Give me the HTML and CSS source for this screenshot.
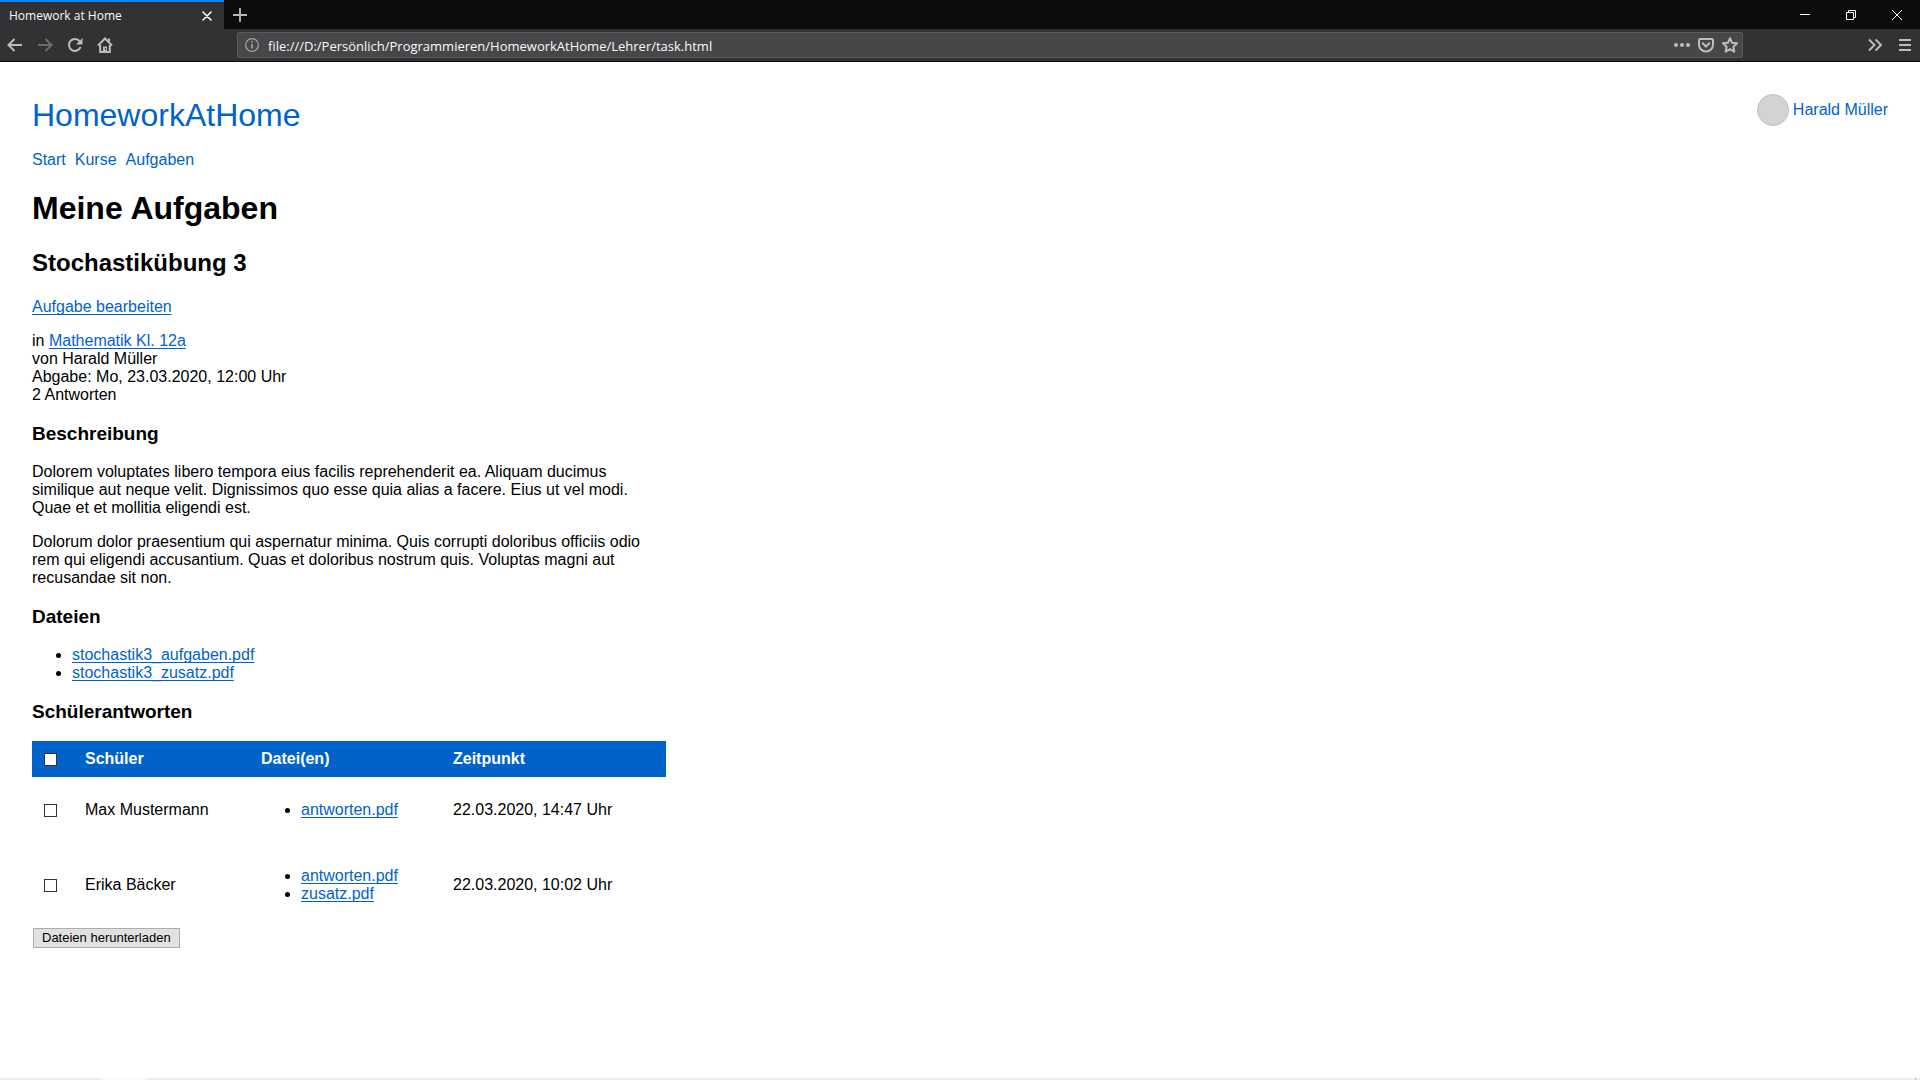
FILE: index.html
```html
<!DOCTYPE html>
<html lang="de">
<head>
<meta charset="utf-8">
<title>Homework at Home</title>
<link rel="stylesheet" href="styles.css">
</head>
<body>
<div class="browser">
  <div class="tabstrip">
    <div class="tab">
      <span class="tab-title">Homework at Home</span>
      <button class="tab-close" aria-label="Tab schließen"><svg width="10" height="10" viewBox="0 0 10 10"><path d="M1 1l8 8M9 1L1 9" stroke="#f9f9fa" stroke-width="1.6" fill="none" stroke-linecap="round"/></svg></button>
    </div>
    <button class="tab-new" aria-label="Neuer Tab"><svg width="14" height="14" viewBox="0 0 14 14"><path d="M7 0v14M0 7h14" stroke="#b8b8b9" stroke-width="1.8"/></svg></button>
    <div class="window-controls">
      <button aria-label="Minimieren"><svg width="10" height="10"><path d="M0 4.5h10" stroke="#fff"/></svg></button>
      <button aria-label="Verkleinern"><svg width="10" height="10"><path d="M.5 2.5h7v7h-7zM2.500 2.500V.5h7v7h-2" stroke="#fff" fill="none"/></svg></button>
      <button aria-label="Schließen"><svg width="10" height="10"><path d="M0 0l10 10M10 0L0 10" stroke="#fff"/></svg></button>
    </div>
  </div>
  <div class="toolbar">
    <button class="tool" aria-label="Zurück"><svg width="16" height="16" viewBox="0 0 16 16"><path d="M15 8H1.500M7.500 2L1.500 8l6 6"/></svg></button>
    <button class="tool disabled" aria-label="Vor" disabled><svg width="16" height="16" viewBox="0 0 16 16"><path d="M1 8h13.500M8.500 2l6 6-6 6"/></svg></button>
    <button class="tool" aria-label="Neu laden"><svg width="16" height="16" viewBox="0 0 16 16"><path d="M12.700 4.200A6 6 0 1 0 13.600 10"/><path class="solid" d="M15.500 1v6.500H9z"/></svg></button>
    <button class="tool" aria-label="Startseite"><svg width="16" height="16" viewBox="0 0 16 16"><path d="M1 8.500L8 1.500l7 7M3.200 8v7h9.600V8"/><path class="solid" d="M11 1.500h2V5l-2-1.500zM6 9.500h4V15H6z"/><path class="knob" d="M8.500 11v2"/></svg></button>
    <div class="urlbar">
      <svg class="info" width="14" height="14" viewBox="0 0 14 14"><circle cx="7" cy="7" r="6.400" fill="none" stroke="#a4a4a5" stroke-width="1.200"/><path d="M7 6v4.500M7 3v1.600" stroke="#a4a4a5" stroke-width="1.600"/></svg>
      <input class="url" type="text" aria-label="Adresse" value="file:///D:/Persönlich/Programmieren/HomeworkAtHome/Lehrer/task.html">
      <button class="url-action" aria-label="Seitenaktionen"><svg width="16" height="16" viewBox="0 0 16 16"><g class="solid"><circle cx="2" cy="8" r="2"/><circle cx="8" cy="8" r="2"/><circle cx="14" cy="8" r="2"/></g></svg></button>
      <button class="url-action" aria-label="Pocket"><svg width="16" height="16" viewBox="0 0 16 16"><path d="M2.300 2h11.400q1.300 0 1.300 1.300V7.500a7 7 0 0 1-14 0V3.300Q1 2 2.300 2z"/><path d="M4.700 6.300L8 9.500l3.300-3.200" stroke-linecap="round"/></svg></button>
      <button class="url-action" aria-label="Lesezeichen"><svg width="16" height="16" viewBox="0 0 16 16"><path d="M8 1.200l2 4.500 5 .6-3.600 3.400.9 5L8 12.200l-4.300 2.500.9-5L1 6.300l5-.6z" stroke-linejoin="round"/></svg></button>
    </div>
    <button class="tool" aria-label="Weitere Werkzeuge"><svg width="16" height="16" viewBox="0 0 16 16"><path d="M2 2.500L7.500 8 2 13.500M8.500 2.500L14 8l-5.500 5.500"/></svg></button>
    <button class="tool" aria-label="Menü"><svg width="16" height="16" viewBox="0 0 16 16"><path d="M2 3h12M2 8h12M2 13h12"/></svg></button>
  </div>
</div>
<div class="page">
  <header class="site-header">
    <div>
      <a class="brand" href="#">HomeworkAtHome</a>
      <nav class="menu"><a href="#">Start</a><a href="#">Kurse</a><a href="#">Aufgaben</a></nav>
    </div>
    <a class="user" href="#"><span class="avatar"></span>Harald Müller</a>
  </header>
  <main class="content">
    <h1>Meine Aufgaben</h1>
    <h2>Stochastikübung 3</h2>
    <p><a href="#">Aufgabe bearbeiten</a></p>
    <p>in <a href="#">Mathematik Kl. 12a</a><br>von Harald Müller<br>Abgabe: Mo, 23.03.2020, 12:00 Uhr<br>2 Antworten</p>
    <h3>Beschreibung</h3>
    <p>Dolorem voluptates libero tempora eius facilis reprehenderit ea. Aliquam ducimus similique aut neque velit. Dignissimos quo esse quia alias a facere. Eius ut vel modi. Quae et et mollitia eligendi est.</p>
    <p>Dolorum dolor praesentium qui aspernatur minima. Quis corrupti doloribus officiis odio rem qui eligendi accusantium. Quas et doloribus nostrum quis. Voluptas magni aut recusandae sit non.</p>
    <h3>Dateien</h3>
    <ul>
      <li><a href="#">stochastik3_aufgaben.pdf</a></li>
      <li><a href="#">stochastik3_zusatz.pdf</a></li>
    </ul>
    <h3>Schülerantworten</h3>
    <table class="answers">
      <colgroup><col class="col-check"><col class="col-name"><col class="col-files"><col></colgroup>
      <thead>
        <tr><th><input type="checkbox" aria-label="Alle auswählen"></th><th>Schüler</th><th>Datei(en)</th><th>Zeitpunkt</th></tr>
      </thead>
      <tbody>
        <tr>
          <td><input type="checkbox" id="max"></td>
          <td><label for="max">Max Mustermann</label></td>
          <td><ul><li><a href="#">antworten.pdf</a></li></ul></td>
          <td>22.03.2020, 14:47 Uhr</td>
        </tr>
        <tr>
          <td><input type="checkbox" id="erika"></td>
          <td><label for="erika">Erika Bäcker</label></td>
          <td><ul><li><a href="#">antworten.pdf</a></li><li><a href="#">zusatz.pdf</a></li></ul></td>
          <td>22.03.2020, 10:02 Uhr</td>
        </tr>
      </tbody>
    </table>
    <button class="download">Dateien herunterladen</button>
  </main>
</div>
<div class="taskbar"><span class="taskbar-active"></span><span class="taskbar-edge"></span></div>
</body>
</html>
```
FILE: styles.css
```css
* { box-sizing: border-box; }

body {
  margin: 0;
  min-height: 100vh;
  display: flex;
  flex-direction: column;
  background: #fff;
  color: #000;
  font: 16px/18px "Liberation Sans", Arial, sans-serif;
}

/* Browser window */
.browser {
  background: #323234;
  border-bottom: 1px solid #0c0c0d;
  font: 12px/16px "Open Sans", "Noto Sans", sans-serif;
  color: #f9f9fa;
}
.browser button {
  display: flex;
  align-items: center;
  justify-content: center;
  padding: 0;
  border: 0;
  background: none;
}
.tabstrip {
  display: flex;
  height: 29px;
  background: #0c0c0d;
}
.tab {
  display: flex;
  align-items: center;
  justify-content: space-between;
  width: 224px;
  padding: 0 8px 0 9px;
  border-top: 2px solid #0a84ff;
  background: #323234;
}
.tab-close { width: 18px; height: 18px; }
.tab-new { width: 32px; }
.window-controls { display: flex; margin-left: auto; }
.window-controls button { width: 46px; }

.toolbar {
  display: flex;
  align-items: center;
  height: 32px;
}
.toolbar button path {
  fill: none;
  stroke: #bdbdbe;
  stroke-width: 2;
}
.toolbar button .solid {
  fill: #bdbdbe;
  stroke: none;
}
.toolbar button .knob {
  stroke: #38383d;
  stroke-width: 1;
}
.toolbar .tool { width: 30px; height: 32px; }
.toolbar .disabled path { stroke: #6c6c6d; }
.urlbar {
  display: flex;
  align-items: center;
  flex: 1;
  height: 26px;
  margin: 0 117px;
  border: 1px solid #5a5a5c;
  border-radius: 2px;
  background: #474749;
}
.info { margin: 0 8px 0 7px; }
.url {
  flex: 1;
  min-width: 0;
  padding: 2px 0 0 1px;
  border: 0;
  background: none;
  color: #f9f9fa;
  font: 13px/18px "Open Sans", "Noto Sans", sans-serif;
}
.toolbar .url-action { width: 24px; height: 24px; }

/* Page */
.page { flex: 1; padding: 32px; }
a { color: #0063cc; text-decoration-skip-ink: none; text-underline-offset: 2px; text-decoration-thickness: 1px; }
.site-header {
  display: flex;
  align-items: flex-start;
  justify-content: space-between;
}
.site-header a { text-decoration: none; }
.brand {
  display: block;
  font-size: 32px;
  line-height: 42px;
}
.menu {
  display: flex;
  gap: 9px;
  margin-top: 15px;
}
.user {
  display: flex;
  align-items: center;
  gap: 4px;
  line-height: 20px;
}
.avatar {
  width: 32px;
  height: 32px;
  border: 1px solid #c0c0c0;
  border-radius: 50%;
  background: #d3d3d3;
}

.content { width: 33vw; }
h1 { margin: 21px 0; font-size: 32px; line-height: 37px; }
h2 { margin: 22px 0 21px; font-size: 24px; line-height: 28px; }
h3 { margin: 19px 0; font-size: 19px; line-height: 21px; }
p, ul { margin: 16px 0; }
ul { padding-left: 40px; }

.answers {
  width: 100%;
  border-collapse: collapse;
  table-layout: fixed;
}
.col-check { width: 45px; }
.col-name { width: 176px; }
.col-files { width: 192px; }
.answers th, .answers td { padding: 8px; text-align: left; }
.answers th {
  padding: 9px 8px;
  background: #0063cc;
  color: #fff;
}
.answers input {
  display: block;
  width: 13px;
  height: 13px;
  margin: 0 4px;
  appearance: none;
  border: 1px solid #333;
  background: #fff;
}
.download {
  display: block;
  height: 20px;
  margin: 1px;
  padding: 0 8px;
  border: 1px solid #adadad;
  background: #e1e1e1;
  color: #000;
  font: 13px/16px "Liberation Sans", Arial, sans-serif;
}

/* Top edge of the desktop taskbar */
.taskbar {
  display: flex;
  justify-content: space-between;
  height: 2px;
  padding: 0 4px 0 100px;
  background: #ededed;
}
.taskbar-active { width: 48px; background: #f9f9f9; }
.taskbar-edge { width: 1px; background: #b0b0b0; }
```
